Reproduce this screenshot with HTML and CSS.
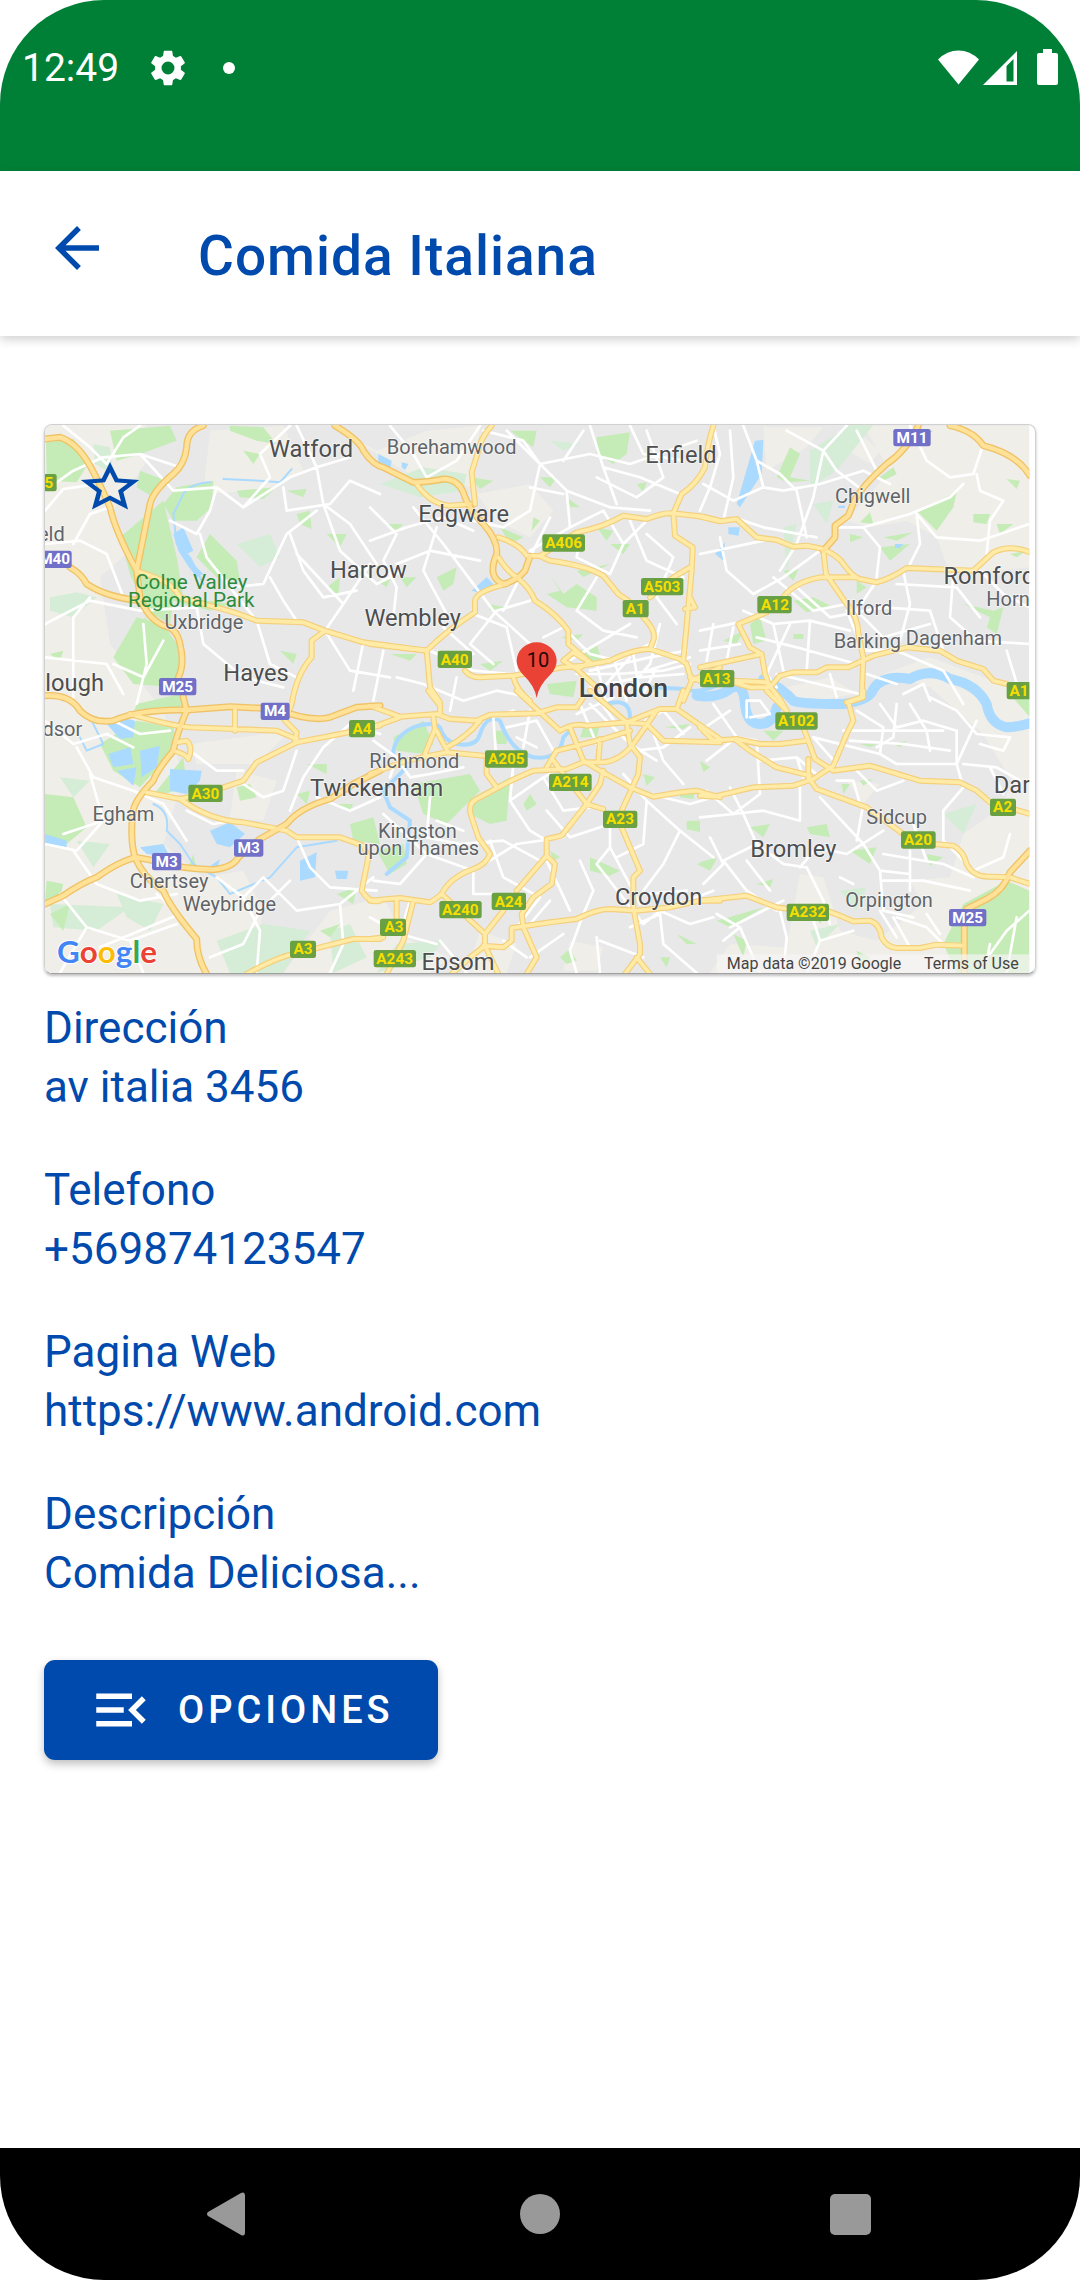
FILE: index.html
```html
<!DOCTYPE html>
<html lang="es">
<head>
<meta charset="utf-8">
<meta name="viewport" content="width=device-width, initial-scale=1">
<title>Comida Italiana</title>
<link rel="stylesheet" href="styles.css">
</head>
<body>
<div class="screen">
  <div class="status">
    <span class="clock">12:49</span>
    <svg class="gear" viewBox="2 2 20 20" aria-hidden="true"><path d="M19.14 12.94c.04-.3.06-.61.06-.94 0-.32-.02-.64-.07-.94l2.03-1.58a.49.49 0 0 0 .12-.61l-1.92-3.32a.488.488 0 0 0-.59-.22l-2.39.96c-.5-.38-1.03-.7-1.62-.94l-.36-2.54a.484.484 0 0 0-.48-.41h-3.84c-.24 0-.43.17-.47.41l-.36 2.54c-.59.24-1.13.57-1.62.94l-2.39-.96c-.22-.08-.47 0-.59.22L2.74 8.87c-.12.21-.08.47.12.61l2.03 1.58c-.05.3-.09.63-.09.94s.02.64.07.94l-2.03 1.58a.49.49 0 0 0-.12.61l1.92 3.32c.12.22.37.29.59.22l2.39-.96c.5.38 1.03.7 1.62.94l.36 2.54c.05.24.24.41.48.41h3.84c.24 0 .44-.17.47-.41l.36-2.54c.59-.24 1.13-.56 1.62-.94l2.39.96c.22.08.47 0 .59-.22l1.92-3.32c.12-.22.07-.47-.12-.61l-2.01-1.58zM12 15.600A3.600 3.600 0 1 1 12 8.400a3.600 3.600 0 0 1 0 7.200z"/></svg>
    <span class="dot"></span>
    <svg class="signals" viewBox="0 0 120 37" aria-hidden="true">
      <path d="M0 10.500Q9 1.500 20.500 1.500T41 10.500L20.500 35.500Z"/>
      <path fill-rule="evenodd" d="M45 36L79 2V36ZM68.500 17V32.500H75.500V10Z"/>
      <path d="M105 0h9v4h4q2 0 2 2v28q0 2-2 2h-17q-2 0-2-2V6q0-2 2-2h4Z"/>
    </svg>
  </div>

  <header class="bar">
    <button class="back" type="button" aria-label="Volver"><svg viewBox="0 0 24 24" aria-hidden="true"><path d="M20 11H7.830l5.590-5.590L12 4l-8 8 8 8 1.410-1.410L7.830 13H20v-2z"/></svg></button>
    <h1 class="title">Comida Italiana</h1>
  </header>

  <main class="content">
    <section class="card" aria-label="Mapa">
      <svg class="map" viewBox="45 43 2970 1644" role="img" aria-label="Mapa de Londres">
        <defs>
          <clipPath id="frame"><rect x="45" y="43" width="2953" height="1644"/></clipPath>
          <g id="arterial">
            <path d="M320 480L375 500Q430 520 450 560L540 585Q620 605 680 630L820 635 885 660 1000 695 1190 720M885 660L845 690V740Q800 790 785 880L765 930 800 965 795 995"/>
            <g transform="translate(0 840)">
              <path d="M300 70Q420 105 480 110L740 120 800 145M615 50V120M1050 105L930 130 800 155 680 215 640 270 520 310 450 325M350 305L450 325Q540 390 640 395L770 420 800 440H930L1000 465 1015 500 995 600Q1020 640 1050 630M430 180Q470 190 475 205 490 170 470 150L440 155M650 850Q740 800 790 790L870 770 970 745H1050"/>
            </g>
            <g transform="translate(1020 0)">
              <path d="M365 45Q330 85 325 120L305 185 315 280M140 220Q180 280 240 285L300 280M385 380Q450 400 470 435L510 436 620 365Q700 350 760 315L830 325Q880 305 910 308L1000 318 1050 330M1030 45Q1010 110 1005 170 980 220 935 250L910 308 915 375 968 410 965 480 940 750M510 436L540 450Q650 465 700 495L745 550 775 570M385 440Q410 480 440 500 480 530 495 570 560 610 595 660V700L660 755M440 500L410 520Q320 540 315 570V605Q230 660 170 720L0 700M170 720L180 830 210 875M285 780Q300 800 330 800L430 795 580 770 640 765 720 750Q790 715 840 715L930 745 950 760 965 810 940 870M820 620Q860 660 850 690L840 715M840 560L910 500 960 470M960 560L975 590 945 595M580 750L610 725 660 755 620 775ZM430 800Q440 840 480 870M620 775L680 830M965 810L1050 770"/>
            </g>
            <g transform="translate(2010 0)">
              <path d="M0 318L60 332 110 325 170 380 230 388 280 408 320 405 370 415Q420 440 430 460 460 500 480 505L530 515Q570 505 620 472L820 480 880 425Q930 400 990 425M470 500L360 500Q280 515 250 560M200 605L115 640 150 710 185 730 195 790 210 830M370 420L378 490 440 580Q475 620 475 670L490 740 485 860 440 875M0 770L185 730M100 815L150 830H210L240 795 280 785H350L380 770H445L520 735 620 710 720 720 770 750 850 775 880 810 920 820M-30 800L0 810M100 810L200 815 240 865 260 900"/>
            </g>
            <g transform="translate(1020 840)">
              <path d="M0 45L90 78 200 70 240 85 320 90 360 72 500 68 560 50H620L640 20M175 0L210 45V70M20 105L90 80M0 250L110 210 180 195 230 185 340 195M190 80L195 115 165 190M200 120L215 150 235 185M230 170Q290 140 330 90M350 195V250L380 290M440 0L500 55 570 120Q610 95 650 105L770 95 870 55H920L940 0M660 0L770 95 780 160 810 200 805 250 755 360M770 95L830 100 880 150 1050 155M920 55L1050 145M860 60L790 160Q750 210 700 215H640L590 235 490 240Q430 265 385 290L320 325Q290 340 305 380L325 440 360 490Q350 520 310 535 240 560 215 610 190 630 180 635L90 622 0 630M600 110L640 210 690 240 780 290 850 318 930 305 980 300 1050 320M530 230L560 180 700 145 780 120M690 145L685 215M550 210L650 340 700 355M700 240L690 280 650 340 575 435 530 445V495L555 520 545 580 490 620 455 670 460 710 500 800 470 850M530 495L440 600M400 660L345 730V765L385 850M215 610L345 730M345 765L300 800 245 850M340 765L400 770 425 750V712L540 695 620 685Q680 655 720 655L800 660 900 650 990 630H1050M755 410L810 540 790 560V650L810 760V790L765 850M800 800L840 850M80 625V690M130 630L100 750 50 850M0 745L40 740"/>
            </g>
            <g transform="translate(2010 840)">
              <path d="M0 110L40 150 110 145 180 160H240L320 150M200 0L260 60M310 110L345 205 400 240 510 225 660 270 780 275 830 300 870 335M940 355L990 370M110 150L150 180 230 230 330 255M0 315L40 318 160 290 280 285 340 265 400 225 440 130 460 90 445 35 490 20V0M325 205V260L350 295 500 350 610 430M700 460L760 465Q790 480 800 520 820 560 870 558L930 560 990 580M0 630L140 615 230 650 270 655M380 660L420 675 460 692 510 690Q540 700 545 740 560 770 590 772H660L710 762 790 765"/>
            </g>
          </g>
          <g id="motorway">
            <path d="M45 85L90 80Q140 95 180 165 215 230 240 290 255 360 320 480L330 560Q350 620 400 645 440 650 450 700 465 760 445 800L470 900Q440 970 430 1020 380 1080 370 1110 310 1170 308 1210 300 1290 315 1340 340 1400 400 1440 420 1490 500 1585 500 1640 530 1690M520 45Q470 60 470 110 465 160 430 190 370 240 360 280 340 380 320 480M120 470Q155 490 170 520 230 560 330 570M915 45Q990 90 1000 120 1030 165 1060 170L1150 215Q1190 215 1240 205 1290 205 1305 260 1320 300 1360 340 1405 390 1400 430 1370 500 1420 520 1460 510 1485 480L1500 438"/>
            <path d="M45 855Q120 850 150 900 190 940 250 930 330 895 470 898L600 888 740 895Q840 935 900 920L980 890 1050 885M45 1480L100 1455Q150 1420 200 1400 270 1350 320 1340L370 1350Q450 1375 550 1377 610 1370 625 1340L690 1285 770 1240Q810 1190 900 1165L970 1120 1050 1080"/>
            <path d="M2665 45Q2630 120 2570 160 2480 240 2465 290L2455 315 2415 345V380L2380 420M2760 45Q2830 60 2860 105 2960 130 3000 195M3000 1320L2940 1385Q2920 1440 2870 1465L2810 1495 2803 1540V1690"/>
          </g>
        </defs>
        <g clip-path="url(#frame)">
          <rect class="urban" x="45" y="43" width="2953" height="1644"/>
          <g class="land">
            <path d="M45 43H350L300 110 350 150 250 300 300 420 210 500 240 700 400 900 460 1100 400 1300 520 1400 640 1380 700 1500 660 1687H45ZM540 60L760 45 820 180 700 240 520 250ZM900 43L1040 120 1190 60 1350 45 1330 230 1140 190ZM1340 250L1500 220 1570 300 1500 380 1400 330ZM480 1000L780 960 680 1060 500 1060ZM620 1080L740 1110 700 1230 600 1220ZM900 1500L1060 1460 1120 1580 1260 1640 1200 1687H760ZM1350 1560L1460 1600 1430 1687H1310ZM1620 1590L1720 1610 1700 1680H1600Z"/>
            <path d="M2200 50H2380L2330 110 2210 180ZM2500 45H2998V470L2760 490 2720 380 2630 330 2520 350 2450 330 2580 180ZM2480 60L2550 120 2520 160 2440 110ZM2560 790L2700 740 2860 800 2998 830V1687H2040L2100 1600 2270 1610 2310 1390 2380 1400 2430 1560 2540 1590 2680 1480 2640 1410 2760 1400 2800 1270 2900 1200 2950 1120 2860 970 2700 830ZM2270 830L2400 800 2480 850 2300 880ZM2450 1110L2550 1120 2500 1180Z"/>
          </g>
          <g class="park-soft">
            <path d="M190 100L240 110 250 190 195 160ZM60 560L140 545 200 560 130 620 60 600ZM620 400L720 370 750 440 690 470ZM1050 220L1180 170 1310 190 1300 240 1170 260ZM2340 120L2460 43H2530L2420 180 2340 230ZM2350 280L2410 270 2390 340ZM2260 350L2300 340 2270 490ZM90 1100L180 1110 130 1160ZM140 1290L240 1300 190 1370ZM60 1480L300 1490 200 1560 70 1550ZM1560 90L1650 100 1600 120ZM2740 1210L2840 1180 2800 1270ZM2430 1440L2510 1430 2480 1500ZM2340 1560L2430 1540 2360 1610ZM560 1590L700 1540 840 1560 760 1687H600ZM900 1560L960 1540 1010 1640 910 1687ZM1100 1600L1240 1590 1200 1640 1040 1687ZM260 1450L400 1480 360 1560 290 1520Z"/>
          </g>
          <g class="park">
            <path d="M48 95L130 85 180 150 140 215 50 210ZM240 60L420 45 440 90 330 130 260 150ZM330 180L420 215 370 260 320 230ZM440 230L550 210 545 290 500 330 430 330 400 280ZM270 380L400 270 440 440 460 560 600 580 540 600 430 570 420 640 350 600 300 490ZM500 440L540 370 620 450 630 510 560 500ZM250 740L320 620 400 640 440 700 450 760 430 830 310 820ZM600 45L700 50 740 100 680 90 600 60ZM620 240L740 230 700 265 630 260ZM640 120L690 130 670 160ZM800 310L840 300 845 355 810 340ZM890 370L950 370 930 410ZM770 240L830 235 820 260ZM750 720L800 730 790 760ZM890 530L930 500 925 560ZM60 730L100 720 90 750ZM310 640L350 620 330 690Z"/>
            <path d="M320 880L450 850 460 890 310 910ZM210 1000L320 930 430 950 440 1010 330 1130 250 1080ZM380 1140L460 1040 470 1130 370 1160ZM45 1150L130 1160 170 1250 110 1300 45 1290ZM50 1410L100 1420 90 1460 45 1470ZM60 1510L120 1480 100 1560ZM620 1130L660 1120 680 1160 630 1170ZM960 1240L1030 1220 1050 1300 970 1290ZM830 1060L890 1060 890 1090ZM800 1150L840 1140 830 1180ZM920 1180L970 1180 960 1200ZM920 1450L980 1430 970 1480ZM870 1560L930 1540 900 1580ZM490 1330L500 1380 475 1370Z"/>
            <path d="M1700 80L1800 65 1790 130 1750 160 1700 130ZM1440 60L1520 60 1510 110ZM1530 200L1580 200 1560 230ZM1320 200L1390 210 1350 235ZM1410 350L1480 380 1440 400ZM1510 320L1530 330 1505 360ZM1820 220L1850 215 1840 245ZM1610 260L1650 290 1620 290ZM1220 500L1280 470 1270 520 1240 540ZM1070 340L1120 340 1100 360ZM1040 510L1080 505 1070 530ZM1110 500L1160 500 1130 530ZM1550 550L1590 540 1560 490 1600 550 1640 520 1700 560 1700 600 1610 590ZM1375 580L1425 590 1380 600ZM1650 720L1700 700 1715 750 1650 750ZM1740 400L1800 400 1780 430ZM1640 480L1740 460 1660 500ZM1700 350L1750 360 1730 390ZM1590 680L1660 670 1640 690ZM1350 760L1420 750 1380 780ZM1550 820L1640 810 1630 860 1560 850ZM1080 730L1160 730 1140 750Z"/>
            <path d="M2240 200L2280 110 2310 130 2280 200 2340 210 2270 215ZM2660 300L2780 245 2770 290 2720 360ZM2830 310L2880 310 2870 340 2830 335ZM2900 340L2950 340 2910 370ZM2930 205L2970 210 2960 235ZM2550 410L2640 400 2580 450ZM2490 335L2520 305 2530 340ZM2560 380L2650 365 2600 390ZM2460 370L2500 380 2460 395ZM2480 510L2510 530 2480 550ZM2290 570L2350 560 2410 590 2330 605ZM2260 480L2305 475 2290 510ZM2160 640L2190 620 2210 690 2170 700ZM2080 690L2140 660 2120 700ZM2290 670H2320V685H2290ZM2800 580L2890 600 2920 590 2900 670 2870 650 2880 620ZM2930 840L3000 820V920ZM2550 200L2590 170 2600 190 2560 210ZM2940 430L2990 420 2960 440ZM2660 60L2710 60 2690 75ZM2540 1000L2490 1000 2520 1010ZM2200 960L2260 960 2230 990ZM2160 1250L2220 1240 2200 1280ZM2330 1250L2390 1240 2400 1280 2340 1270ZM2435 1120L2460 1120 2440 1150ZM2490 1110L2530 1105 2500 1125ZM2010 1355L2060 1340 2030 1370ZM2690 1330L2740 1340 2700 1365ZM2460 1320L2540 1310 2520 1360ZM2590 1000L2630 990 2610 1010ZM2800 1480L2930 1410 2998 1440V1687H2780L2740 1600ZM2180 1420L2230 1405 2220 1430ZM2060 1530L2200 1490 2100 1550ZM2110 1570L2150 1590 2140 1640ZM2480 1620L2520 1640 2490 1680ZM2340 1490L2390 1500 2370 1540Z"/>
            <path d="M1090 980L1180 930 1210 1000 1180 1030 1100 1020ZM1150 1120L1320 1090 1350 1140 1250 1240 1180 1210ZM1330 1160L1440 1100 1430 1230 1380 1240 1320 1210ZM1040 1320L1120 1300 1130 1360 1080 1390ZM1395 960L1430 960 1430 1000 1400 1000ZM1660 950L1710 945 1700 980 1650 980ZM1840 1090L1875 1100 1850 1125ZM1680 1340L1770 1380 1740 1395 1680 1380ZM1970 1230L2010 1230 2010 1265 1970 1255ZM1590 1640L1620 1615 1640 1650 1610 1660ZM2000 1360L2060 1345 2040 1380ZM1900 950L1980 940 1960 955ZM2010 1050L2040 1070 2020 1085ZM1560 1320L1590 1340 1570 1350ZM1940 1570L2000 1600 1970 1600ZM1890 1640L1920 1640 1910 1670ZM1480 1180L1500 1150 1520 1180 1490 1200ZM1950 1140L2000 1130 1990 1165 1950 1160Z"/>
          </g>
          <g class="water">
            <path d="M430 370L460 350 490 420 470 430 500 470 520 490 500 500 470 460 445 420ZM2175 90L2200 88 2195 190 2130 290 2120 280ZM2095 350L2130 350 2125 375 2095 370ZM2055 430L2085 395 2080 450ZM2595 400H2620L2610 412H2595ZM2425 285H2445V292H2425ZM1045 130L1085 150 1080 180 1045 170ZM1115 155L1135 160 1125 178 1115 170ZM1325 540L1370 500 1390 520 1360 550Z"/>
            <path d="M230 940L270 920 315 930 310 980 270 985ZM330 1020L390 1005 380 1070 335 1100ZM420 1075L515 1080 510 1110 470 1150 420 1140ZM235 1030L300 1010 310 1060 250 1070ZM260 1080L320 1070 310 1125ZM45 1270L110 1290 110 1310 45 1300ZM540 1260L600 1235 645 1270 600 1310 560 1300ZM810 1350L860 1325 855 1400 810 1410ZM915 1380L955 1380 950 1405 920 1405ZM535 1370L570 1345 560 1380ZM330 1310L400 1300 420 1340 350 1330Z"/>
          </g>
          <path class="river" d="M1870 830L1960 835Q2000 850 2060 825M1730 880Q1800 860 1800 920"/>
          <path class="river wide" d="M2000 855Q2060 865 2100 835 2140 810 2145 880 2150 940 2190 940 2230 940 2240 890M2200 805Q2260 835 2290 870 2310 880 2440 880 2520 870 2530 835 2560 790 2640 805 2700 770 2760 805 2840 820 2870 880 2880 940 2930 950 2960 950 3010 935"/>
          <path class="river" d="M1280 1000Q1340 1010 1350 970 1370 910 1410 930 1440 1020 1510 1040 1590 1050 1600 980L1620 960M1280 1000Q1240 990 1230 950 1210 930 1150 950 1090 980 1090 1030M1130 1070L1060 1140 1080 1190 1140 1230 1130 1340 1070 1390"/>
          <path class="river thin" d="M540 215Q470 220 455 260L430 310 440 400 480 440 520 520M580 205L690 210 750 215 785 175M150 980L170 1020 220 1000 180 920M370 1180Q420 1200 410 1260L450 1300 490 1360 560 1400 600 1450 720 1400 800 1310 920 1290"/>
          <path class="minor" d="M45 240L130 180 220 140 330 130 450 170M100 45L180 110 230 160 280 80 330 45M330 130L430 240 560 230 640 290 780 200 860 170 960 140M560 230L540 300 500 370 420 330M640 290L720 200 690 130 780 45M800 45L860 170 880 280 960 340 1040 460M760 230L770 300 900 280 960 210 1050 250M45 400L150 390 230 430 280 560M45 640L180 570 330 600 500 590M180 560L130 620 130 860M240 290L180 310 130 400M45 300L100 235 170 225M510 370L530 440 600 530 680 630M600 530L700 520 770 370 860 300M720 500L760 570 800 630M880 280L930 420 1040 520 1120 480M800 430L940 580 1020 460M780 370L820 480 880 560 980 540M940 580L885 660 960 780 1080 800M1000 695L970 840M500 590L520 700 640 800 760 830M680 630L720 760 800 800M340 640L350 760 320 880M250 760L340 800 400 690M45 740L230 760 280 850M45 930L130 1000 230 970 310 1010M140 1010L190 1100 310 1140 400 1180 470 1290M250 930L330 970 420 960M480 1020L560 1080 640 1080M45 1300L140 1320 220 1230 180 1090M130 1320L200 1420 330 1470 440 1450M220 1230L100 1270M90 1450L170 1550 300 1590 440 1540M170 1550L90 1687M300 1590L340 1687M210 1610L450 1510 380 1450M470 1200L550 1240 610 1230M640 1120L700 1160 760 1140 800 1020M560 1400L640 1460 700 1400 800 1500 930 1480 1030 1400M640 1460L690 1560 680 1687M540 1640L640 1600 690 1500 780 1410M930 1480L940 1600 900 1687M780 1200L820 1100 880 1010 960 940 1050 970M860 1160L960 1200 1050 1160M800 1280L840 1370 900 1430 1040 1440"/>
          <path class="minor" d="M1080 45L1150 130 1190 200 1280 150 1350 45M1020 290L1100 370 1060 450 1100 530 1090 620M1020 390L1130 350 1240 320 1330 360M1150 290L1240 400 1300 480 1390 600M1100 460L1200 420 1350 450M1220 350L1180 480 1250 610M1330 330L1420 350 1500 300 1530 160 1480 90 1360 60M1430 60L1530 160 1680 130 1800 160 2000 90M1530 160L1610 240 1620 350 1500 420M1610 240L1740 290 1860 300M1680 45L1720 170 1760 280M1720 170L1830 200 1950 250M1800 45L1840 130 1960 150M1850 60L1900 200 1820 260 1700 200M1600 150L1660 60M1500 230L1600 250M1560 320L1500 440 1420 600M1620 350L1720 300 1780 400 1850 330M1780 400L1740 490 1640 440 1650 380M1800 330L1850 450 1960 500M1850 370L1930 440 1880 560 1940 640M1700 500L1640 600 1720 660 1820 680M1500 570L1400 600 1320 700 1390 760M1390 600L1500 700 1560 780M1330 610L1430 650 1460 780M1200 720L1330 780 1440 790M1240 650L1330 730M1540 680L1600 650 1680 730 1760 750 1860 700M1600 760L1700 700 1800 640M1680 780L1860 740 1970 720M1720 830L1800 740M1780 850L1860 760 1890 640M1840 850L1880 770M1850 780L1980 740M1640 790L1760 790 1900 780 1980 760M1680 830L1830 800 1960 790M1700 760L1730 880M1750 740L1790 870M1810 730L1830 850M1100 800L1180 820 1300 870 1400 840 1500 860M1280 800L1260 900M1060 720L1030 870"/>
          <path class="minor" d="M2050 45L2070 130 2040 230 2010 300M2100 60L2110 200 2080 330M2140 45L2180 150 2250 190 2300 240 2330 380M2180 150L2200 230 2110 270 2020 220M2200 230L2260 240 2370 220 2500 180 2580 220M2450 45L2380 120 2420 180 2500 240M2380 120L2350 260 2300 400 2250 480M2380 120L2270 60M2480 60L2540 180M2640 45L2690 150 2760 200 2830 190 2860 100M2840 190L2850 240 2920 270 2880 330 2870 430M2410 350L2500 350 2550 410 2540 500M2500 350L2640 310 2760 260 2800 220M2660 310L2720 380 2850 390 2998 340M2660 310L2670 400 2640 460M2070 380L2090 480 2170 550M2010 430L2200 390M2170 550L2260 500 2370 420M2110 320L2200 350 2360 380M2230 500L2350 600 2450 580M2300 530L2400 620 2560 590 2700 600M2540 510L2480 600 2560 680 2700 640M2620 480L2640 580 2610 690M2700 600L2740 720M2600 520L2780 530 2850 620M2770 490L2760 620 2840 690 2998 700M2140 600L2230 640 2340 630 2460 660M2230 640L2260 780M2180 680L2300 710 2480 760M2340 630L2330 780M2280 640L2210 790 2240 830M2010 720L2130 700M2010 660L2150 630M2030 750L2050 640M2090 750L2110 650M2450 600L2500 720 2600 720 2740 780 2800 880M2850 480L2920 550 2998 590M2930 720L2970 850M2240 790L2490 850M2400 790L2420 860M2510 790L2600 820"/>
          <path class="minor" d="M1030 990L1100 1040 1140 1100 1200 1090 1300 1070M1100 1040L1080 1100M1200 1160L1190 1280 1290 1300 1420 1290 1530 1350M1220 1230L1300 1260M1060 1210L1190 1330 1110 1420 1030 1410M1190 1330L1330 1380 1330 1450 1400 1450M1330 1380L1460 1300 1600 1280M1380 1290L1420 1400 1530 1460 1460 1550M1450 1060L1440 1170 1540 1100 1600 1070M1440 1170L1500 1260 1550 1290M1540 1100L1600 1200 1680 1190M1550 1200L1620 1280 1740 1240 1740 1310 1830 1480M1740 1310L1700 1360 1840 1540 1890 1500M1780 1090L1850 1170 1840 1300 1760 1340M1850 1170L1950 1260 1900 1360 1840 1440M1950 1260L2050 1340M1650 1350L1690 1440 1660 1510 1620 1620 1640 1687M1550 1350L1620 1500M1800 1550L1890 1510 1900 1600 2000 1687M1890 1500L1980 1540 2050 1520M1890 1500L2050 1440M1850 1450L1970 1440M1700 1580L1710 1687M1710 1590L1840 1640M1490 1640L1420 1590M1500 1640L1600 1570M1400 1060L1390 920 1450 900M1430 950L1520 930 1570 1020M1460 980L1520 1010M1500 900L1480 1010M1650 880L1700 1000M1680 880L1800 1000 1880 1050M1700 860L1760 940M1640 910L1750 860M1830 940L1900 900 1960 970M1820 1020L1900 1010 1980 950M1860 940L1900 1050 1960 1120M1860 1150L1980 1180 2050 1160M1020 1520L1110 1570 1140 1470M1110 1570L1220 1600M1230 1590L1310 1687M1500 1540L1560 1470"/>
          <path class="minor" d="M2010 960L2100 900M2030 1050L2120 980 2180 990 2190 1150 2110 1210 2030 1140M2120 980L2050 880M2190 1050L2300 1040 2370 1100 2420 1060 2350 980 2550 1030M2300 1040L2320 1100M2010 1220L2110 1210 2200 1200 2310 1230 2310 1130M2100 1130L2140 1210 2180 1300 2080 1350 2150 1440 2240 1500M2040 1280L2080 1360 2020 1420M2150 1350L2220 1440M2180 1300L2260 1360 2330 1370 2380 1470 2400 1540M2310 1370L2360 1310 2450 1330 2560 1260M2370 1160L2500 1300 2550 1380 2640 1390M2500 1180L2480 1290M2550 1380L2560 1500 2650 1520M2640 1320L2640 1440M2560 1410L2680 1410 2820 1440M2560 1330L2740 1360 2830 1400M2690 1350L2650 1240M2740 1200L2740 1290 2830 1380 2920 1340 2940 1270M2740 1200L2800 1130 2780 1060 2840 930M2480 900L2560 950 2550 1030 2600 1060 2780 1060M2550 880L2600 950 2680 930 2780 960 2780 1060M2600 880L2590 980 2540 1010M2640 880L2690 960 2700 1020M2700 860L2780 900 2840 970 2940 980 2920 1020 2850 1000M2460 990L2620 1000 2760 1020M2440 960L2740 960M2800 1060L2900 1070 2970 1110M2880 1070L2920 1150M2480 1080L2540 1140 2620 1110M2420 1110L2470 1110 2490 1180M2100 1550L2260 1470M2060 1510L2130 1550 2190 1687M2130 1550L2080 1590M2250 1500L2270 1580 2260 1687M2340 1500L2370 1590 2470 1560M2370 1590L2330 1687M2430 1400L2470 1420M2600 1520L2690 1550 2740 1600M2690 1510L2730 1570M2550 1500L2600 1580M2590 1520L2640 1610M2880 1630L2930 1560 2998 1500M2960 1520L2930 1687M2880 1600L2870 1650M2150 920L2150 870 2190 870 2220 910 2160 920M2620 850L2680 820 2700 870"/>
          <use class="arterial-edge" href="#arterial"/>
          <use class="motorway-edge" href="#motorway"/>
          <use class="arterial-fill" href="#arterial"/>
          <use class="motorway-fill" href="#motorway"/>

          <g class="a-road">
            <rect x="30" y="190" width="50" height="52" rx="7"/><rect x="957" y="928" width="78" height="52" rx="7"/><rect x="475" y="1122" width="103" height="52" rx="7"/><rect x="780" y="1590" width="78" height="52" rx="7"/><rect x="1050" y="1524" width="78" height="52" rx="7"/><rect x="1031" y="1618" width="127" height="52" rx="7"/><rect x="1228" y="1471" width="127" height="52" rx="7"/><rect x="1385" y="1446" width="103" height="52" rx="7"/><rect x="1365" y="1019" width="128" height="52" rx="7"/><rect x="1557" y="1089" width="128" height="52" rx="7"/><rect x="1719" y="1200" width="103" height="52" rx="7"/><rect x="1537" y="371" width="128" height="52" rx="7"/><rect x="1833" y="502" width="127" height="52" rx="7"/><rect x="1778" y="568" width="78" height="52" rx="7"/><rect x="1223" y="720" width="103" height="52" rx="7"/><rect x="2182" y="556" width="103" height="52" rx="7"/><rect x="2010" y="778" width="103" height="52" rx="7"/><rect x="2930" y="814" width="103" height="52" rx="7"/><rect x="2236" y="905" width="127" height="52" rx="7"/><rect x="2880" y="1164" width="78" height="52" rx="7"/><rect x="2613" y="1262" width="104" height="52" rx="7"/><rect x="2270" y="1479" width="127" height="52" rx="7"/>
          </g>
          <g class="a-name">
            <text x="57" y="231">5</text><text x="996" y="970">A4</text><text x="526" y="1164">A30</text><text x="819" y="1631">A3</text><text x="1092" y="1565">A3</text><text x="1094" y="1659">A243</text><text x="1291" y="1513">A240</text><text x="1436" y="1488">A24</text><text x="1429" y="1060">A205</text><text x="1621" y="1130">A214</text><text x="1770" y="1241">A23</text><text x="1601" y="413">A406</text><text x="1896" y="543">A503</text><text x="1816" y="610">A1</text><text x="1274" y="762">A40</text><text x="2235" y="598">A12</text><text x="2060" y="819">A13</text><text x="2980" y="855">A13</text><text x="2299" y="946">A102</text><text x="2918" y="1205">A2</text><text x="2664" y="1304">A20</text><text x="2333" y="1520">A232</text>
          </g>
          <g class="m-road">
            <rect x="20" y="420" width="105" height="52" rx="7"/><rect x="387" y="802" width="112" height="52" rx="7"/><rect x="692" y="876" width="87" height="52" rx="7"/><rect x="612" y="1286" width="88" height="52" rx="7"/><rect x="366" y="1327" width="88" height="52" rx="7"/><rect x="2590" y="55" width="112" height="52" rx="7"/><rect x="2757" y="1495" width="112" height="52" rx="7"/>
          </g>
          <g class="m-name">
            <text x="74" y="461">M40</text><text x="443" y="844">M25</text><text x="735" y="917">M4</text><text x="656" y="1327">M3</text><text x="410" y="1369">M3</text><text x="2646" y="96">M11</text><text x="2813" y="1536">M25</text>
          </g>
          <g class="town">
            <text x="843" y="138">Watford</text><text x="1953" y="157">Enfield</text><text x="1301" y="335">Edgware</text><text x="1015" y="502">Harrow</text><text x="1148" y="647">Wembley</text><text x="678" y="810">Hayes</text><text x="134" y="840">lough</text><text x="1040" y="1155">Twickenham</text><text x="1284" y="1677">Epsom</text><text x="1886" y="1482">Croydon</text><text x="2878" y="519">Romford</text><text x="2946" y="1147">Dar</text><text x="2290" y="1340">Bromley</text>
          </g>
          <g class="village">
            <text x="1265" y="129">Borehamwood</text><text x="522" y="655">Uxbridge</text><text x="64" y="392">eld</text><text x="97" y="977">dsor</text><text x="280" y="1230">Egham</text><text x="417" y="1432">Chertsey</text><text x="598" y="1500">Weybridge</text><text x="1153" y="1073">Richmond</text><text x="1162" y="1283">Kingston</text><text x="1165" y="1332">upon Thames</text><text x="2528" y="277">Chigwell</text><text x="2517" y="613">Ilford</text><text x="2512" y="712">Barking</text><text x="2772" y="702">Dagenham</text><text x="2934" y="585">Horn</text><text x="2600" y="1239">Sidcup</text><text x="2577" y="1488">Orpington</text>
          </g>
          <g class="park-name"><text x="484" y="535">Colne Valley</text><text x="484" y="589">Regional Park</text></g>
          <text class="city" x="1780" y="858">London</text>
          <path class="pin" d="M1520 862Q1514 825 1480 793 1460 772 1460 750A60 55 0 0 1 1580 750Q1580 772 1560 793 1526 825 1520 862Z"/>
          <text class="pin-number" x="1524" y="770">10</text>
          <rect class="legal-strip" x="2060" y="1631" width="938" height="56"/>
          <g class="legal"><text x="2352" y="1676">Map data ©2019 Google</text><text x="2824" y="1676">Terms of Use</text></g>
          <text class="google" x="231" y="1657"><tspan class="g-blue">G</tspan><tspan class="g-red">o</tspan><tspan class="g-yellow">o</tspan><tspan class="g-blue">g</tspan><tspan class="g-green">l</tspan><tspan class="g-red">e</tspan></text>
        </g>
      </svg>
      <button class="favorite" type="button" aria-label="Agregar a favoritos"><svg viewBox="0 0 24 24" preserveAspectRatio="none" aria-hidden="true"><path d="M22 9.240l-7.190-.62L12 2 9.190 8.630 2 9.240l5.460 4.730L5.820 21 12 17.270 18.180 21l-1.630-7.030L22 9.240zM12 15.400l-3.760 2.270 1-4.280-3.320-2.880 4.380-.38L12 6.100l1.710 4.040 4.380.38-3.320 2.880 1 4.280L12 15.400z"/></svg></button>
    </section>

    <dl class="details">
      <div><dt>Dirección</dt><dd>av italia 3456</dd></div>
      <div><dt>Telefono</dt><dd>+569874123547</dd></div>
      <div><dt>Pagina Web</dt><dd><a href="https://www.android.com">https://www.android.com</a></dd></div>
      <div><dt>Descripción</dt><dd>Comida Deliciosa...</dd></div>
    </dl>

    <button class="options" type="button"><svg viewBox="0 0 24 24" aria-hidden="true"><path d="M3 18h13v-2H3v2zM3 6v2h13V6H3zm0 7h10v-2H3v2zm18 2.590L17.420 12 21 8.410 19.590 7l-5 5 5 5L21 15.590z"/></svg>OPCIONES</button>
  </main>

  <nav class="system" aria-label="Sistema">
    <button type="button" aria-label="Atrás"><svg viewBox="0 0 44 46"><path d="M2 21L35 2Q39 0 39 5V41Q39 46 35 44L2 25Q0 23 2 21Z"/></svg></button>
    <button type="button" aria-label="Inicio"><svg viewBox="0 0 44 46"><circle cx="22" cy="23" r="20"/></svg></button>
    <button type="button" aria-label="Recientes"><svg viewBox="0 0 44 46"><rect x="0" y="3" width="41" height="41" rx="5"/></svg></button>
  </nav>
</div>
</body>
</html>
```
FILE: styles.css
```css
* { box-sizing: border-box; }

html { background: #fff; }

body {
  margin: 0;
  font-family: Roboto, "Noto Sans", sans-serif;
  color: #004aad;
}

button {
  margin: 0;
  padding: 0;
  border: 0;
  background: none;
  color: inherit;
  font: inherit;
}

svg {
  display: block;
  fill: currentColor;
}

.screen {
  display: flex;
  flex-direction: column;
  min-height: 100vh;
  overflow: hidden;
  border-radius: 104px;
  background: #fff;
}

/* status bar */
.status {
  display: flex;
  align-items: center;
  height: 171px;
  padding: 0 22px 36px;
  background: #008037;
  color: #fff;
}

.clock {
  font-size: 39px;
  line-height: 48px;
}

.gear {
  width: 36px;
  height: 36px;
  margin-left: 31px;
}

.dot {
  width: 12px;
  height: 12px;
  margin-left: 37px;
  border-radius: 50%;
  background: #fff;
}

.signals {
  width: 120px;
  height: 37px;
  margin-left: auto;
}

/* app bar */
.bar {
  display: flex;
  align-items: flex-start;
  gap: 88px;
  height: 165px;
  padding: 0 44px;
  box-shadow: 0 3px 10px rgba(0, 0, 0, 0.2);
}

.back {
  display: flex;
  align-items: center;
  height: 154px;
}

.back svg,
.options svg {
  width: 66px;
  height: 66px;
}

.title {
  margin: 0;
  font-size: 55px;
  font-weight: 500;
  line-height: 170px;
  letter-spacing: 1px;
}

/* content */
.content {
  flex: 1;
  padding: 88px 44px 44px;
}

.card {
  position: relative;
  overflow: hidden;
  border: 1px solid #d0d0d0;
  border-bottom-color: #a0a0a0;
  border-radius: 8px;
  box-shadow: 0 2px 3px rgba(0, 0, 0, 0.25);
}

.map {
  width: 100%;
  height: auto;
}

.favorite {
  position: absolute;
  top: 32px;
  left: 30px;
}

.favorite svg {
  width: 70px;
  height: 60px;
}

.details {
  display: grid;
  gap: 44px;
  margin: 25px 0 57px;
  font-size: 44px;
  line-height: 59px;
}

.details dd { margin: 0; }

.details a {
  color: inherit;
  text-decoration: none;
}

.options {
  display: flex;
  align-items: center;
  gap: 24px;
  height: 100px;
  padding: 0 44px;
  border-radius: 11px;
  background: #004aad;
  box-shadow: 0 4px 8px rgba(0, 0, 0, 0.25);
  color: #fff;
  font-size: 38px;
  font-weight: 500;
  letter-spacing: 4px;
}

/* navigation bar */
.system {
  display: flex;
  justify-content: space-around;
  align-items: center;
  height: 132px;
  padding: 0 72px;
  background: #000;
  color: #999;
}

.system svg {
  width: 44px;
  height: 46px;
}

/* map */
.urban { fill: #e8e8e8; }
.land { fill: #f0eee8; }
.park { fill: #c5ecb6; }
.park-soft { fill: #d5edd6; }
.water { fill: #aadaff; }

.river,
.minor,
.arterial-edge,
.arterial-fill,
.motorway-edge,
.motorway-fill {
  fill: none;
  stroke-linecap: round;
  stroke-linejoin: round;
}

.river { stroke: #aadaff; stroke-width: 12; }
.river.wide { stroke-width: 30; }
.river.thin { stroke-width: 6; }
.minor { stroke: #fff; stroke-width: 8; }
.arterial-edge { stroke: #f4cf7c; stroke-width: 18; }
.arterial-fill { stroke: #ffeba5; stroke-width: 11; }
.motorway-edge { stroke: #efc266; stroke-width: 21; }
.motorway-fill { stroke: #ffe197; stroke-width: 13; }

.map text {
  text-anchor: middle;
  paint-order: stroke;
}

.town,
.village,
.city {
  fill: #4c4e50;
  stroke: #fff;
  stroke-opacity: 0.6;
  stroke-width: 5;
}

.town { font-size: 71px; }
.village { font-size: 60px; fill: #606468; }
.city { font-size: 80px; font-weight: 500; fill: #404244; }

.park-name {
  fill: #2d8c3c;
  font-size: 62px;
}

.a-road { fill: #69a042; }
.m-road { fill: #7070c8; }

.a-name,
.m-name {
  font-size: 46px;
  font-weight: 700;
}

.a-name { fill: #f5de00; }
.m-name { fill: #fff; }
.pin { fill: #ea4335; }

.pin-number {
  fill: #200808;
  font-size: 60px;
}

.legal-strip { fill: #f5f5f5; fill-opacity: 0.7; }

.legal {
  fill: #444;
  font-size: 48px;
}

.google {
  font-family: Lato, sans-serif;
  font-size: 94px;
  font-weight: 700;
  stroke: #fff;
  stroke-width: 6;
}

.g-blue { fill: #4285f4; }
.g-red { fill: #ea4335; }
.g-yellow { fill: #fbbc05; }
.g-green { fill: #34a853; }
```
